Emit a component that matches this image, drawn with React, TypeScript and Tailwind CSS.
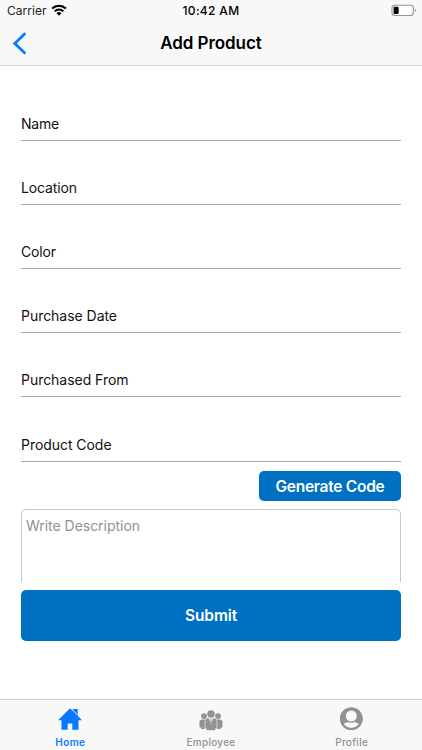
import React from "react";

const fields = [
  { label: "Name", width: 38 },
  { label: "Location", width: 56 },
  { label: "Color", width: 35 },
  { label: "Purchase Date", width: 96 },
  { label: "Purchased From", width: 107.5 },
  { label: "Product Code", width: 90.5 },
];

function Label({ text, width }: { text: string; width: number }) {
  const ref = React.useRef<HTMLSpanElement>(null);
  React.useLayoutEffect(() => {
    const el = ref.current;
    if (!el) return;
    el.style.letterSpacing = "0px";
    const natural = el.getBoundingClientRect().width;
    el.style.letterSpacing = `${(width - natural) / text.length}px`;
  }, [text, width]);
  return (
    <span ref={ref} className="inline-block whitespace-nowrap">
      {text}
    </span>
  );
}

function WifiIcon() {
  return (
    <svg className="mt-[4px] ml-[4px] h-[12px] w-[16px]" viewBox="0 0 16 12" fill="none" stroke="#000">
      <path d="M1.1 4.5a9.9 9.9 0 0 1 13.8 0" strokeWidth="2.1" />
      <path d="M3.6 7.3a6.2 6.2 0 0 1 8.8 0" strokeWidth="1.9" />
      <path d="M8 11.8 5.5 9.3a3.6 3.6 0 0 1 5 0Z" fill="#000" stroke="none" />
    </svg>
  );
}

function BatteryIcon() {
  return (
    <svg className="mt-[4px] h-[13px] w-[26px]" viewBox="0 0 26 13">
      <rect x="1" y="1.2" width="21.3" height="10.3" rx="2.7" fill="#fff" stroke="#949494" strokeWidth="1.1" />
      <rect x="2.6" y="2.8" width="5" height="7.1" rx="1" fill="#000" />
      <path d="M23.8 4.4c1.5.6 1.5 3.3 0 3.9Z" fill="#949494" />
    </svg>
  );
}

function HomeIcon() {
  return (
    <svg className="h-[24px] w-[26px]" viewBox="0 0 26 24" fill="#087aff">
      <path d="M13 1.2 1 13.2h3.5v9.5h6.2v-6.3h4.6v6.3h6.2v-9.5H25L20.7 8.8V2.1h-4.8v1.8Z" />
      <path d="m15.7 3.2 4.5 4.4" stroke="#f8f8f8" strokeWidth="1" />
    </svg>
  );
}

function EmployeeIcon() {
  return (
    <svg className="h-[24px] w-[26px]" viewBox="0 -1 26 24" fill="#929292">
      <circle cx="13" cy="6" r="3.8" />
      <circle cx="6" cy="8.1" r="2.9" />
      <circle cx="20" cy="8.1" r="2.9" />
      <path d="M6.7 21.1H3.2v-1.7H1.5v-5.2c0-1.8 1-2.8 2.6-2.8h3.6c-.7.8-1 1.6-1 2.8ZM19.3 21.1h3.5v-1.7h1.7v-5.2c0-1.8-1-2.8-2.6-2.8h-3.6c.7.8 1 1.6 1 2.8Z" />
      <path d="M7.3 20.5v-7.2c0-2 1.1-3 2.7-3h.9L13 16.8l2.1-6.5h.9c1.6 0 2.7 1 2.7 3v7.2h-1.4v1.7H8.7v-1.7Z" />
      <path d="M12.2 10.4h1.6l-.5 1.3.5 2.5-.8 1.5-.8-1.5.5-2.5Z" />
    </svg>
  );
}

function ProfileIcon() {
  return (
    <svg className="h-[24px] w-[26px]" viewBox="0.7 0.3 26 24">
      <circle cx="13" cy="12" r="11.3" fill="#929292" />
      <circle cx="13" cy="9.3" r="5.5" fill="#f8f8f8" />
      <path d="M5.1 17.4c1-.9 2.7-1.7 4.7-2.2 2 1.2 4.4 1.2 6.4 0 2 .5 3.7 1.3 4.7 2.2a9.6 9.6 0 0 1-15.8 0Z" fill="#f8f8f8" />
      <circle cx="13" cy="12" r="10.3" fill="none" stroke="#929292" strokeWidth="2" />
    </svg>
  );
}

const tabs = [
  { name: "Home", width: 30, icon: <HomeIcon />, style: "text-[#087aff] font-semibold" },
  { name: "Employee", width: 49, icon: <EmployeeIcon />, style: "text-[#929292] font-medium" },
  { name: "Profile", width: 33, icon: <ProfileIcon />, style: "text-[#929292] font-medium" },
];

export default function App() {
  return (
    <div className="flex h-[750px] w-[422px] flex-col overflow-hidden bg-white font-['Inter',sans-serif] text-black">
      <header className="h-[66px] shrink-0 border-b border-[#d2d2d2] bg-[#f8f8f8]">
        <div className="grid h-[22px] grid-cols-3">
          <div className="flex pl-[7px] text-[12px] leading-[22px] text-[#222]">
            <Label text="Carrier" width={39.5} />
            <WifiIcon />
          </div>
          <div className="text-center text-[12px] leading-[22px] font-[550]">
            <Label text="10:42 AM" width={57} />
          </div>
          <div className="flex justify-end pr-[5px]">
            <BatteryIcon />
          </div>
        </div>
        <div className="grid h-[43px] grid-cols-3">
          <button className="flex pt-[10px] pl-[12px]" aria-label="Back">
            <svg className="h-[23px] w-[15px]" viewBox="0 0 15 23" fill="none" stroke="#087aff" strokeWidth="2.8" strokeLinecap="round">
              <path d="M12.5 2 2.8 11.4l9.7 9.4" />
            </svg>
          </button>
          <h1 className="text-center text-[17px] leading-[43px] font-[560]">
            <Label text="Add Product" width={101.5} />
          </h1>
        </div>
      </header>

      <main className="flex flex-1 flex-col px-[21px] pt-[11px]">
        {fields.map((f) => (
          <div key={f.label} className="flex h-[64.1px] shrink-0 items-end border-b border-[#a8a8a8] pb-[6px] text-[14px] leading-[20px] text-[#111]">
            <Label text={f.label} width={f.width} />
          </div>
        ))}
        <button className="mt-[9px] h-[30px] w-[142px] shrink-0 self-end rounded-[5px] bg-[#0070c2] text-[15.5px] leading-[31px] font-[580] text-white">
          <Label text="Generate Code" width={109} />
        </button>
        <div className="mt-[8px] h-[73px] shrink-0 rounded-t-[5px] border border-b-0 border-[#c9c9c9] pt-[6px] pl-[4px] text-[14px] leading-[20px] text-[#929292]">
          <Label text="Write Description" width={114} />
        </div>
        <button className="mt-[8px] h-[51px] shrink-0 rounded-[5px] bg-[#0070c2] text-[15.5px] leading-[52px] font-[580] text-white">
          <Label text="Submit" width={52} />
        </button>
      </main>

      <nav className="grid h-[51px] shrink-0 grid-cols-3 border-t border-[#d2d2d2] bg-[#f8f8f8]">
        {tabs.map((t) => (
          <div key={t.name} className={`flex flex-col items-center pt-[7px] text-[10px] leading-[12px] ${t.style}`}>
            {t.icon}
            <div className="mt-[5px]">
              <Label text={t.name} width={t.width} />
            </div>
          </div>
        ))}
      </nav>
    </div>
  );
}
